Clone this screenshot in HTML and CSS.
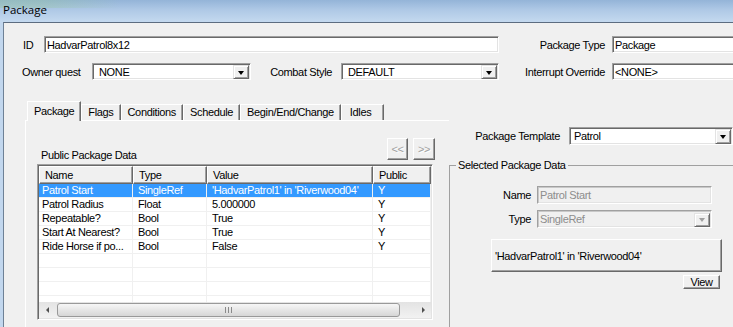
FILE: index.html
```html
<!DOCTYPE html>
<html lang="en">
<head>
  <meta charset="UTF-8">
  <title>Package</title>
  <link rel="stylesheet" href="styles.css">
</head>
<body>
  <div class="window">
    <div class="titlebar">Package</div>
    <div class="client">
      <!-- top fields -->
      <div class="row row-id">
        <label class="lbl lbl-id">ID</label>
        <div class="field w-id">HadvarPatrol8x12</div>
        <label class="lbl lbl-far">Package Type</label>
        <div class="field w-far">Package</div>
      </div>
      <div class="row row-owner">
        <label class="lbl lbl-owner">Owner quest</label>
        <div class="field combo pad-wide w-owner"><span class="val">NONE</span><span class="drop"></span></div>
        <label class="lbl lbl-combat">Combat Style</label>
        <div class="field combo pad-wide w-combat"><span class="val">DEFAULT</span><span class="drop"></span></div>
        <label class="lbl lbl-far">Interrupt Override</label>
        <div class="field w-far">&lt;NONE&gt;</div>
      </div>

      <div class="main">
        <!-- tab control -->
        <div class="tabs">
          <ul class="tabstrip">
            <li class="tab active">Package</li>
            <li class="tab">Flags</li>
            <li class="tab">Conditions</li>
            <li class="tab">Schedule</li>
            <li class="tab">Begin/End/Change</li>
            <li class="tab tab-idles">Idles</li>
          </ul>
          <div class="tabpanel">
            <div class="navrow">
              <span class="caption">Public Package Data</span>
              <div class="navbtns">
                <button class="btn btn-nav" disabled>&lt;&lt;</button>
                <button class="btn btn-nav" disabled>&gt;&gt;</button>
              </div>
            </div>
            <div class="listview">
              <div class="lv-head">
                <span>Name</span><span>Type</span><span>Value</span><span>Public</span>
              </div>
              <div class="lv-rows">
                <div class="lv-row sel"><span>Patrol Start</span><span>SingleRef</span><span>'HadvarPatrol1' in 'Riverwood04'</span><span>Y</span></div>
                <div class="lv-row"><span>Patrol Radius</span><span>Float</span><span>5.000000</span><span>Y</span></div>
                <div class="lv-row"><span>Repeatable?</span><span>Bool</span><span>True</span><span>Y</span></div>
                <div class="lv-row"><span>Start At Nearest?</span><span>Bool</span><span>True</span><span>Y</span></div>
                <div class="lv-row"><span>Ride Horse if po...</span><span>Bool</span><span>False</span><span>Y</span></div>
                <div class="lv-row"><span></span><span></span><span></span><span></span></div>
                <div class="lv-row"><span></span><span></span><span></span><span></span></div>
                <div class="lv-row"><span></span><span></span><span></span><span></span></div>
                <div class="lv-row"><span></span><span></span><span></span><span></span></div>
              </div>
              <div class="hscroll">
                <span class="sb-arrow sb-left"></span>
                <div class="sb-track"><span class="sb-thumb"></span></div>
                <span class="sb-arrow sb-right"></span>
              </div>
            </div>
          </div>
        </div>

        <!-- right side -->
        <div class="side">
          <div class="row tpl-row">
            <label class="lbl lbl-tpl">Package Template</label>
            <div class="field combo w-tpl"><span class="val">Patrol</span><span class="drop"></span></div>
          </div>
          <fieldset class="group">
            <legend>Selected Package Data</legend>
            <div class="grow">
              <label class="lbl">Name</label>
              <div class="field disabled w-data">Patrol Start</div>
            </div>
            <div class="grow grow-type">
              <label class="lbl">Type</label>
              <div class="field combo disabled w-data"><span class="val">SingleRef</span><span class="drop"></span></div>
            </div>
            <button class="btn btn-ref">'HadvarPatrol1' in 'Riverwood04'</button>
            <button class="btn btn-view">View</button>
          </fieldset>
        </div>
      </div>
    </div>
  </div>
</body>
</html>
```

FILE: styles.css
```css
/* reset */
* { box-sizing: border-box; margin: 0; padding: 0; }
body {
  width: 733px; height: 327px; overflow: hidden;
  background: #f0f0f0; color: #000;
  font-family: "Liberation Sans", Arial, sans-serif;
  font-size: 11px; letter-spacing: -0.35px;
}

/* window frame */
.window { width: 900px; height: 400px; background: #c2d7ee; }
.titlebar {
  height: 22px; padding-left: 3px; line-height: 20px;
  font-family: "Open Sans", sans-serif; font-size: 11.5px; letter-spacing: 0;
  background:
    linear-gradient(90deg, rgba(150, 200, 150, 0.35) 40px, rgba(150, 200, 150, 0) 120px) top / 100% 8px no-repeat,
    linear-gradient(180deg, #94b4d8 0%, #afc9e6 45%, #c4d9ef 100%);
}
.client {
  height: 378px; margin-left: 3px;
  background: #f0f0f0;
  border-top: 1px solid #5c6c80; border-left: 1px solid #6e8196;
}

/* rows of label + field */
.row { display: flex; align-items: center; height: 17px; }
.row-id { margin-top: 13px; padding-left: 19px; }
.row-owner { margin-top: 10px; padding-left: 18px; }
.lbl { flex: none; white-space: nowrap; }
.lbl-id { width: 21px; }
.lbl-owner { width: 70px; }
.lbl-combat { width: 90px; padding-right: 9px; text-align: right; }
.lbl-far { width: 113px; padding-right: 7px; text-align: right; }

.field {
  flex: none; height: 17px;
  display: flex; align-items: center;
  padding-left: 2px;
  background: #fff; white-space: nowrap; overflow: hidden;
  border: 1px solid; border-color: #a0a0a0 #fff #fff #a0a0a0;
  box-shadow: inset 1px 1px #696969, inset -1px -1px #e3e3e3;
}
.combo .val { flex: 1; }
.pad-wide { padding-left: 6px; }
.w-id { width: 455px; }
.w-far { width: 200px; }
.w-owner { width: 159px; }
.w-combat { width: 158px; }

/* combo drop button */
.drop {
  flex: none; width: 16px; height: 14px; margin: 1px 1px 0 0;
  display: flex; align-items: center; justify-content: center;
  background: #f0f0f0;
  border: 1px solid; border-color: #e3e3e3 #696969 #696969 #e3e3e3;
  box-shadow: inset 1px 1px #fff, inset -1px -1px #a0a0a0;
}
.drop::after {
  content: ""; margin-top: 1px;
  border-top: 4px solid #000;
  border-left: 3.5px solid transparent; border-right: 3.5px solid transparent;
}

/* main area */
.main { display: flex; margin-top: 21px; padding-left: 21px; }
.tabs { flex: none; width: 424px; }
.tabstrip {
  display: flex; align-items: flex-end;
  height: 19px; padding-left: 2px; list-style: none;
}
.tab {
  height: 16px; padding: 0 6px; line-height: 14px; white-space: nowrap;
  border: 1px solid; border-bottom: 0;
  border-color: #fff #696969 #fff #fff;
  box-shadow: inset -1px 0 #a0a0a0;
}
.tab.active {
  position: relative; z-index: 1;
  height: 20px; margin-bottom: -1px; line-height: 18px;
  background: #f0f0f0;
}
.tab-idles { padding: 0 12px 0 8px; }
.tabpanel {
  height: 300px; padding: 17px 16px 0 11px;
  border-top: 1px solid #fff; border-left: 1px solid #fff;
}

/* buttons */
button {
  font: inherit; letter-spacing: inherit; color: #000;
  background: #f0f0f0;
  border: 1px solid; border-color: #fff #696969 #696969 #fff;
  box-shadow: inset -1px -1px #a0a0a0;
}
.navrow {
  display: flex; align-items: flex-end; justify-content: space-between;
  margin-right: -2px;
}
.caption { padding-left: 4px; line-height: 13px; margin-bottom: -2px; }
.navbtns { display: flex; gap: 5px; }
.btn-nav { width: 21px; height: 22px; color: #a0a0a0; text-shadow: 1px 1px #fff; }
.btn-nav + .btn-nav { width: 22px; }

/* list view */
.listview {
  margin-top: 4px; height: 156px; padding: 1px;
  background: #fff;
  border: 1px solid; border-color: #a0a0a0 #fff #fff #a0a0a0;
  box-shadow: inset 1px 1px #696969, inset -1px -1px #e3e3e3;
}
.lv-head, .lv-row { display: grid; grid-template-columns: 94px 74px 166px 58px; }
.lv-head { height: 18px; }
.lv-head span {
  padding-left: 5px; line-height: 16px; background: #f0f0f0;
  border: 1px solid; border-color: #fff #696969 #696969 #fff;
  box-shadow: inset -1px -1px #a0a0a0;
}
.lv-rows { height: 118px; overflow: hidden; }
.lv-row { height: 14px; }
.lv-row span {
  padding-left: 5px; line-height: 13px; white-space: nowrap; overflow: hidden;
  border-right: 1px solid #f0f0f0; border-bottom: 1px solid #f0f0f0;
}
.lv-row span:first-child { padding-left: 3px; }
.lv-row.sel { background: #3399ff; color: #fff; }

/* horizontal scrollbar */
.hscroll { display: flex; height: 16px; background: linear-gradient(#e3e3e3, #f2f2f2); }
.sb-arrow { flex: none; width: 16px; display: flex; align-items: center; justify-content: center; }
.sb-arrow::after { content: ""; border-top: 3px solid transparent; border-bottom: 3px solid transparent; }
.sb-left::after { border-right: 3px solid #505050; }
.sb-right::after { border-left: 3px solid #505050; }
.sb-track { flex: 1; display: flex; padding: 1px 0 1px 2px; }
.sb-thumb {
  width: 343px; display: flex; align-items: center; justify-content: center;
  border: 1px solid #999; border-radius: 3px;
  background: linear-gradient(#f6f6f6, #e6e6e6 50%, #d6d6d6);
}
.sb-thumb::after {
  content: ""; width: 1px; height: 6px; background: #8a8a8a;
  box-shadow: -3px 0 #8a8a8a, 3px 0 #8a8a8a;
}

/* right side */
.side { flex: none; width: 300px; padding-top: 26px; }
.tpl-row { height: 18px; }
.lbl-tpl { width: 120px; padding-right: 9px; text-align: right; }
.w-tpl { width: 164px; height: 18px; padding-left: 4px; }
.w-tpl .drop { height: 15px; }

.group { margin-top: 14px; width: 290px; height: 200px; border: 1px solid #a0a0a0; }
.group legend { margin-left: 6px; padding: 0 2px; line-height: 13px; }
.grow { display: flex; align-items: center; height: 18px; margin-top: 14px; }
.grow-type { margin-top: 6px; }
.grow .lbl { width: 87px; padding-right: 6px; text-align: right; }
.w-data { width: 175px; height: 18px; }
.field.disabled {
  background: #f0f0f0; color: #8d8d8d;
  box-shadow: inset 1px 1px #c8c8c8, inset -1px -1px #e3e3e3;
}
.disabled .drop::after { border-top-color: #a0a0a0; }

.btn-ref {
  display: block; width: 231px; height: 33px;
  margin: 11px 0 0 41px; padding-left: 3px; text-align: left;
}
.btn-view {
  display: block; width: 37px; height: 14px;
  margin: 3px 0 0 233px; line-height: 12px;
}
```
